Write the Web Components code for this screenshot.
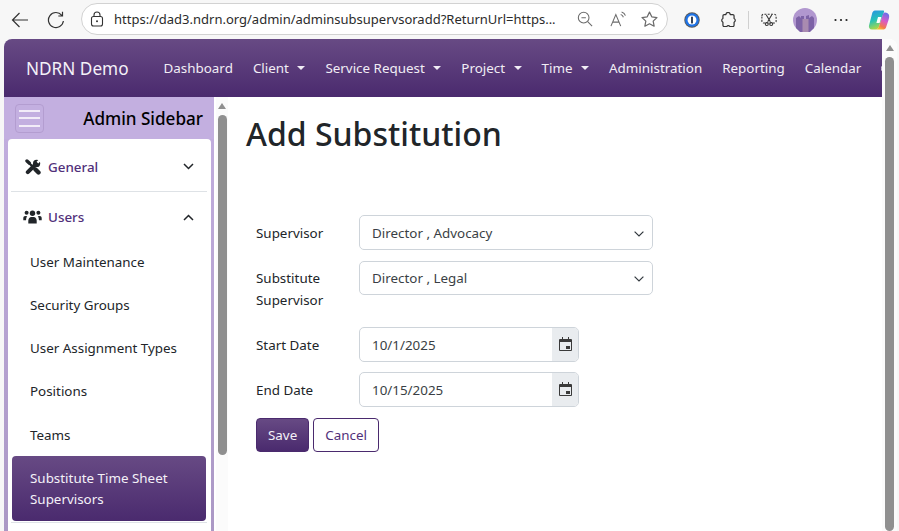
<!DOCTYPE html>
<html lang="en">
<head>
<meta charset="utf-8">
<title>Add Substitution</title>
<style>
  html, body { margin: 0; height: 100%; overflow: hidden; background: #f7f7f7; }
  body { font-family: "Noto Sans", "Open Sans", sans-serif; font-size: 14px; color: #212529; display: flex; flex-direction: column; }
</style>
</head>
<body>
<browser-bar url="https://dad3.ndrn.org/admin/adminsubsupervsoradd?ReturnUrl=https..."></browser-bar>
<app-window>
  <app-navbar slot="top" brand="NDRN Demo">
    <nav-link>Dashboard</nav-link>
    <nav-link caret>Client</nav-link>
    <nav-link caret>Service Request</nav-link>
    <nav-link caret>Project</nav-link>
    <nav-link caret>Time</nav-link>
    <nav-link>Administration</nav-link>
    <nav-link>Reporting</nav-link>
    <nav-link>Calendar</nav-link>
  </app-navbar>
  <admin-sidebar slot="side" title="Admin Sidebar">
    <side-group icon="tools" chevron="down" label="General"></side-group>
    <side-group icon="users" chevron="up" label="Users">
      <side-item>User Maintenance</side-item>
      <side-item>Security Groups</side-item>
      <side-item>User Assignment Types</side-item>
      <side-item>Positions</side-item>
      <side-item>Teams</side-item>
      <side-item active>Substitute Time Sheet Supervisors</side-item>
    </side-group>
  </admin-sidebar>
  <substitution-form slot="main" heading="Add Substitution">
    <form-row label="Supervisor"><select-box value="Director , Advocacy"></select-box></form-row>
    <form-row label="Substitute Supervisor" tall><select-box value="Director , Legal" short></select-box></form-row>
    <form-row label="Start Date"><date-box value="10/1/2025"></date-box></form-row>
    <form-row label="End Date" snug><date-box value="10/15/2025"></date-box></form-row>
    <div slot="actions" style="display:flex;gap:4px;">
      <app-button primary>Save</app-button>
      <app-button>Cancel</app-button>
    </div>
  </substitution-form>
</app-window>

<script>
// small helper so every element sets up its shadow root the same way
class Base extends HTMLElement {
  connectedCallback() {
    if (!this.shadowRoot) {
      this.attachShadow({ mode: 'open' });
      this.shadowRoot.innerHTML = this.markup();
    }
  }
}

const ICONS = {
  tools: `<svg width="16" height="16" viewBox="0 0 16 16" fill="none" stroke="#212529" stroke-linecap="round"><path stroke-width="3.400" d="M2 2l2.200 2"/><path stroke-width="2.400" d="M4 4l6 6"/><path stroke-width="4.400" d="M10.500 10.500l3 3"/><path stroke-width="4" d="M2.800 13.200l7.700-7.700"/><circle cx="11.600" cy="4.400" r="3.600" fill="#212529" stroke="none"/><path stroke="#fff" stroke-width="2.400" stroke-linecap="butt" d="M12.400 3.600l3-3"/></svg>`,
  users: `<svg width="19" height="14" viewBox="0 0 19 14"><g fill="#212529"><circle cx="9.500" cy="3.200" r="2.700"/><circle cx="3.600" cy="2.700" r="2"/><circle cx="15.400" cy="2.700" r="2"/><path d="M5.300 13.400v-2.600c0-2 1.500-3.700 3-3.700h2.400c1.500 0 3 1.700 3 3.700v2.600z"/><path d="M4.200 6.200c-.7.900-1.100 2-1.100 3.300v.8H.3V8.100c0-1.100.9-2 1.900-2zM14.800 6.200c.7.900 1.100 2 1.100 3.300v.8h2.800V8.100c0-1.100-.9-2-1.900-2z"/></g></svg>`
};

class BrowserBar extends Base {
  markup() {
    return `<style>
      :host { display: flex; align-items: center; height: 39px; flex: none; background: #f7f7f7; box-sizing: border-box; }
      svg { display: block; flex: none; }
      .nav { display: flex; align-items: center; gap: 18px; margin-left: 11px; margin-right: 16px; }
      .pill { display: flex; align-items: center; width: 587px; height: 32px; box-sizing: border-box; border: 1px solid #d2d2d2; border-radius: 16px; background: #fff; padding-left: 8px; margin-top: -1px; flex: none; }
      .url { font: 13px "Noto Sans", sans-serif; color: #2b2b2b; margin-left: 10px; width: 444px; flex: none; white-space: nowrap; }
      .in { display: flex; align-items: center; margin-left: 19px; }
      .ext { display: flex; align-items: center; margin-left: 16px; }
      .sep { width: 1px; height: 18px; background: #d0d0d0; margin: 0 12px; }
    </style>
    <div class="nav">
      <svg width="18" height="18" viewBox="0 0 18 18" fill="none" stroke="#333" stroke-width="1.200"><path d="M17 9H1.500M8.500 2 1.500 9l7 7"/></svg>
      <svg width="18" height="18" viewBox="0 0 18 18" fill="none" stroke="#333" stroke-width="1.200"><path d="M14.800 4.300A7.500 7.500 0 1 0 16.400 10M15.500 .8v4.200h-4.200"/></svg>
    </div>
    <div class="pill">
      <svg width="14" height="16" viewBox="0 0 14 16" fill="none" stroke="#333" stroke-width="1.100"><rect x="1.500" y="5.500" width="11" height="9.500" rx="2"/><path d="M4 5.500V4a3 3 0 0 1 6 0v1.500"/><circle cx="7" cy="10.200" r="1" fill="#333" stroke="none"/></svg>
      <span class="url">${this.getAttribute('url')}</span>
      <div class="in">
        <svg width="16" height="16" viewBox="0 0 18 18" fill="none" stroke="#6b6b6b" stroke-width="1.200"><circle cx="7.500" cy="7.500" r="6"/><path d="M12 12 17 17M5 7.500h5"/></svg>
        <svg width="17" height="16" viewBox="0 0 19 18" fill="none" stroke="#6b6b6b" stroke-width="1.200" style="margin-left:17px"><path d="M1 17 6.500 4 12 17M3 12.500h7M12 4c1.500.5 2.500 1.500 3 3M13 1c2 .6 3.700 2.300 4.300 4.300"/></svg>
        <svg width="17" height="17" viewBox="0 0 18 18" fill="none" stroke="#6b6b6b" stroke-width="1.300" stroke-linejoin="round" style="margin-left:14px"><path d="m9 1.200 2.400 5 5.500.7-4 3.800 1 5.400L9 13.500l-4.900 2.600 1-5.400-4-3.800 5.500-.7z"/></svg>
      </div>
    </div>
    <div class="ext">
      <svg width="16" height="16" viewBox="0 0 18 18"><circle cx="9" cy="9" r="8.700" fill="#5a5a5a"/><circle cx="9" cy="9" r="7.700" fill="#1f74e8"/><circle cx="9" cy="9" r="5" fill="#fff"/><rect x="8" y="5" width="2" height="8" rx="1" fill="#1a2a44"/></svg>
      <svg width="15" height="15" viewBox="2 .5 16 17.500" fill="none" stroke="#333" stroke-width="1.400" stroke-linejoin="round" style="margin-left:21px"><path d="M7 3.500a2.500 2.500 0 0 1 5 0h3a1.500 1.500 0 0 1 1.500 1.500v3a2.500 2.500 0 0 1 0 4.500V16a1.500 1.500 0 0 1-1.500 1.500h-3.500a2 2 0 0 0-3.500 0H5A1.500 1.500 0 0 1 3.500 16v-3.500a2.500 2.500 0 0 1 0-4.500V5A1.500 1.500 0 0 1 5 3.500z"/></svg>
      <span class="sep"></span>
      <svg width="16" height="15" viewBox="0 0 18 16" fill="none" stroke="#333" stroke-width="1.200"><path stroke-dasharray="2.200 1.500" d="M1 4a2 2 0 0 1 2-2h12a2 2 0 0 1 2 2v6a2 2 0 0 1-2 2H3a2 2 0 0 1-2-2z"/><path d="m6 3 4.500 7.500M12 3 7.500 10.500"/><circle cx="6.500" cy="13" r="1.700"/><circle cx="11.500" cy="13" r="1.700"/></svg>
      <svg width="24" height="24" viewBox="0 0 24 24" style="margin-left:16px"><circle cx="12" cy="12" r="12" fill="#b197cf"/><path fill="#7d62a6" d="M3 20V10l3-2 2 2V8h3v3h2V8l3-1v3l3-2 2 2v10l-4 4H7z"/><rect x="9.500" y="11" width="6" height="13" fill="#a98bb0"/></svg>
      <svg width="14" height="4" viewBox="0 0 14 4" style="margin-left:17px"><circle cx="1.500" cy="2" r="1.100" fill="#222"/><circle cx="7" cy="2" r="1.100" fill="#222"/><circle cx="12.500" cy="2" r="1.100" fill="#222"/></svg>
      <svg width="22" height="22" viewBox="0 0 22 22" style="margin-left:20px">
        <defs>
          <linearGradient id="cp1" x1="0" y1="0" x2="0.300" y2="1"><stop offset="0" stop-color="#2a8fe6"/><stop offset=".55" stop-color="#27c2b8"/><stop offset="1" stop-color="#a6d84a"/></linearGradient>
          <linearGradient id="cp2" x1="0.700" y1="0" x2="0.300" y2="1"><stop offset="0" stop-color="#6a6fe8"/><stop offset=".45" stop-color="#d95ac8"/><stop offset=".8" stop-color="#f2794e"/><stop offset="1" stop-color="#f7c52e"/></linearGradient>
        </defs>
        <path fill="url(#cp1)" d="M7 1.500h8c1 0 1.300.6 1 1.400L11 17.500c-.5 1.600-1.500 3-3.500 3H4C1.500 20.500.5 18.500 1 16.500L4 5c.4-2 1.500-3.500 3-3.500z"/>
        <path fill="url(#cp2)" d="M21 6c.5 2-.2 4-.5 5l-2.500 7.500c-.6 1.500-1.700 2-3 2H7.500c1.800 0 3-1.500 3.500-3l3.500-11c.4-1.500 1-3 2.500-3 2 0 3.400 1 4 2.500z"/>
        <path fill="#fff" d="M10 8h3.400l-1.800 6H8.400z"/>
      </svg>
    </div>`;
  }
}

class AppWindow extends Base {
  markup() {
    return `<style>
      :host { display: flex; flex: 1; min-height: 0; margin-left: 4px; margin-right: 2px; background: #fff; border-radius: 8px 8px 0 0; overflow: hidden; }
      .page { flex: 1; min-width: 0; display: flex; flex-direction: column; }
      .body { flex: 1; min-height: 0; display: flex; }
      .scroll { flex: none; box-sizing: border-box; background: #fbfbfb; display: flex; flex-direction: column; align-items: center; padding-top: 6px; }
      .outer { width: 15px; }
      .inner { width: 12px; margin-left: 2px; }
      .arrow { width: 0; height: 0; border: 4.500px solid transparent; border-top: 0; border-bottom: 6px solid #8f8f8f; }
      .thumb { width: 9px; background: #8f8f8f; border-radius: 5px; }
      .outer .thumb { height: 480px; margin-top: 6px; }
      .inner .thumb { height: 340px; margin-top: 6px; }
      .main { flex: 1; min-width: 0; }
    </style>
    <div class="page">
      <slot name="top"></slot>
      <div class="body">
        <slot name="side"></slot>
        <div class="scroll inner"><div class="arrow"></div><div class="thumb"></div></div>
        <div class="main"><slot name="main"></slot></div>
      </div>
    </div>
    <div class="scroll outer"><div class="arrow"></div><div class="thumb"></div></div>`;
  }
}

class AppNavbar extends Base {
  markup() {
    return `<style>
      :host { display: flex; align-items: center; height: 58px; flex: none; padding-left: 22px; overflow: hidden; color: #fff;
        background: linear-gradient(#674a84, #4a2a6e); }
      .brand { font-size: 17.200px; margin-right: 35px; white-space: nowrap; color: #f4f1f8; }
      nav { display: flex; align-items: center; gap: 20px; white-space: nowrap; padding-bottom: 1px; }
      .cut { flex: none; width: 9px; height: 9px; border: 1.500px solid #e8e3ee; border-radius: 50%; margin-left: 20px; }
    </style>
    <span class="brand">${this.getAttribute('brand')}</span>
    <nav><slot></slot></nav>
    <span class="cut"></span>`;
  }
}

class NavLink extends Base {
  markup() {
    const caret = this.hasAttribute('caret') ? '<i></i>' : '';
    return `<style>
      :host { display: inline-flex; align-items: center; font-size: 13.400px; color: #f1edf5; }
      i { width: 0; height: 0; margin-left: 8.500px; border: 4px solid transparent; border-bottom: 0; border-top-color: #f1edf5; }
    </style><slot></slot>${caret}`;
  }
}

class AdminSidebar extends Base {
  markup() {
    return `<style>
      :host { display: flex; flex-direction: column; width: 210px; flex: none; box-sizing: border-box; min-height: 0; overflow: hidden;
        background: linear-gradient(#c3afe0, #ab98c5); }
      .head { display: flex; align-items: center; justify-content: space-between; height: 42px; flex: none; padding: 0 11px; background: #c3afe0; }
      .burger { width: 29px; height: 29px; box-sizing: border-box; border: 1px solid #b39dd0; border-radius: 4px; display: flex; flex-direction: column; justify-content: center; gap: 5.500px; align-items: center; }
      .burger b { display: block; width: 21px; height: 2px; background: #f2ecf8; }
      h2 { margin: 1px 0 0; font-size: 17.100px; font-weight: 500; color: #000; }
      .card { margin: 0 3px 0 4px; background: #fff; flex: 1; border-radius: 4px 4px 0 0; padding: 0 4px 0 3px; box-sizing: border-box; }
    </style>
    <div class="head">
      <div class="burger"><b></b><b></b><b></b></div>
      <h2>${this.getAttribute('title')}</h2>
    </div>
    <div class="card"><slot></slot></div>`;
  }
}

class SideGroup extends Base {
  markup() {
    const up = this.getAttribute('chevron') === 'up';
    return `<style>
      :host { display: block; }
      .row { display: flex; align-items: center; height: 53px; padding: 3px 13px 0 12px; border-bottom: 1px solid #dee2e6; box-sizing: border-box; color: #51307a; font-size: 13.400px; font-weight: 500; }
      :host([chevron="up"]) .row { border-bottom: 0; height: 48.500px; padding-top: 2px; }
      .ic { width: 19px; display: flex; justify-content: center; margin-right: 6px; }
      .lb { flex: 1; }
      svg { display: block; }
      .chev { transform: ${up ? 'rotate(180deg)' : 'none'}; }
      .list { display: flex; flex-direction: column; }
      :host([chevron="up"]) .list { border-bottom: 1px solid #dee2e6; }
    </style>
    <div class="row">
      <span class="ic">${ICONS[this.getAttribute('icon')]}</span>
      <span class="lb">${this.getAttribute('label')}</span>
      <svg class="chev" width="11" height="7" viewBox="0 0 11 7" fill="none" stroke="#212529" stroke-width="1.500"><path d="m1 1 4.500 4.500L10 1"/></svg>
    </div>
    <div class="list"><slot></slot></div>`;
  }
}

class SideItem extends Base {
  markup() {
    return `<style>
      :host { display: block; font-size: 13.400px; line-height: 21px; color: #212529; padding: 11px 19px 11.250px; }
      :host([active]) { color: #f4f1f8; margin: -.5px 1px 1px; padding: 12px 18px 11px; border-radius: 4px; background: linear-gradient(#674a84, #4a2a6e); }
    </style><slot></slot>`;
  }
}

class SubstitutionForm extends Base {
  markup() {
    return `<style>
      :host { display: block; padding: 17px 0 0 18px; }
      h1 { margin: 0 0 61px 0; font-size: 32px; line-height: 40px; font-weight: 500; color: #212529; }
      form { display: flex; flex-direction: column; gap: 11px; padding-left: 10px; }
    </style>
    <h1>${this.getAttribute('heading')}</h1>
    <form><slot></slot><slot name="actions"></slot></form>`;
  }
}

class FormRow extends Base {
  markup() {
    return `<style>
      :host { display: grid; grid-template-columns: 103px 1fr; align-items: start; font-size: 13.400px; color: #212529; }
      :host([tall]) { min-height: 55px; }
      :host([snug]) { margin-top: -.5px; padding-bottom: .5px; }
      label { line-height: 22px; padding-top: 7px; }
      :host([tall]) label { padding-top: 6px; width: 80px; }
    </style>
    <label>${this.getAttribute('label')}</label>
    <div><slot></slot></div>`;
  }
}

const FIELD = `box-sizing: border-box; border: 1px solid #ced4da; border-radius: 5px; background: #fff; font-size: 13.400px; color: #3a3f45; display: flex; align-items: center;`;

class SelectBox extends Base {
  markup() {
    return `<style>
      :host { display: flex; ${FIELD} height: 35px; width: 294px; padding: 0 12px; justify-content: space-between; }
      :host([short]) { height: 33.500px; }
      svg { display: block; margin-top: 2px; margin-right: -4px; }
    </style>
    <span>${this.getAttribute('value')}</span>
    <svg width="10" height="6" viewBox="0 0 10 6" fill="none" stroke="#343a40" stroke-width="1.200"><path d="m.6.6 4.400 4.400L9.400.6"/></svg>`;
  }
}

class DateBox extends Base {
  markup() {
    return `<style>
      :host { display: flex; ${FIELD} height: 34.500px; width: 220px; overflow: hidden; }
      span { flex: 1; padding: 1px 0 0 12px; }
      .add { width: 26px; align-self: stretch; background: #e9ecef; display: flex; align-items: center; justify-content: center; }
      svg { display: block; }
    </style>
    <span>${this.getAttribute('value')}</span>
    <div class="add"><svg width="13" height="14" viewBox="0 0 13 14"><path fill="#3a3a3a" d="M3 0h1v2h5V0h1v2h2a1 1 0 0 1 1 1v10a1 1 0 0 1-1 1H1a1 1 0 0 1-1-1V3a1 1 0 0 1 1-1h2zM1 5V13h11V5z"/><rect x="7" y="9" width="4" height="3" fill="#3a3a3a"/></svg></div>`;
  }
}

class AppButton extends Base {
  markup() {
    return `<style>
      :host { display: inline-flex; align-items: center; height: 34px; box-sizing: border-box; padding: 0 11px; border: 1px solid #4a2a6e; border-radius: 4px; font-size: 13.400px; color: #51307a; background: #fff; }
      :host([primary]) { color: #f4f1f8; background: linear-gradient(#674a84, #4a2a6e); }
    </style><slot></slot>`;
  }
}

customElements.define('browser-bar', BrowserBar);
customElements.define('app-window', AppWindow);
customElements.define('app-navbar', AppNavbar);
customElements.define('nav-link', NavLink);
customElements.define('admin-sidebar', AdminSidebar);
customElements.define('side-group', SideGroup);
customElements.define('side-item', SideItem);
customElements.define('substitution-form', SubstitutionForm);
customElements.define('form-row', FormRow);
customElements.define('select-box', SelectBox);
customElements.define('date-box', DateBox);
customElements.define('app-button', AppButton);
</script>
</body>
</html>
